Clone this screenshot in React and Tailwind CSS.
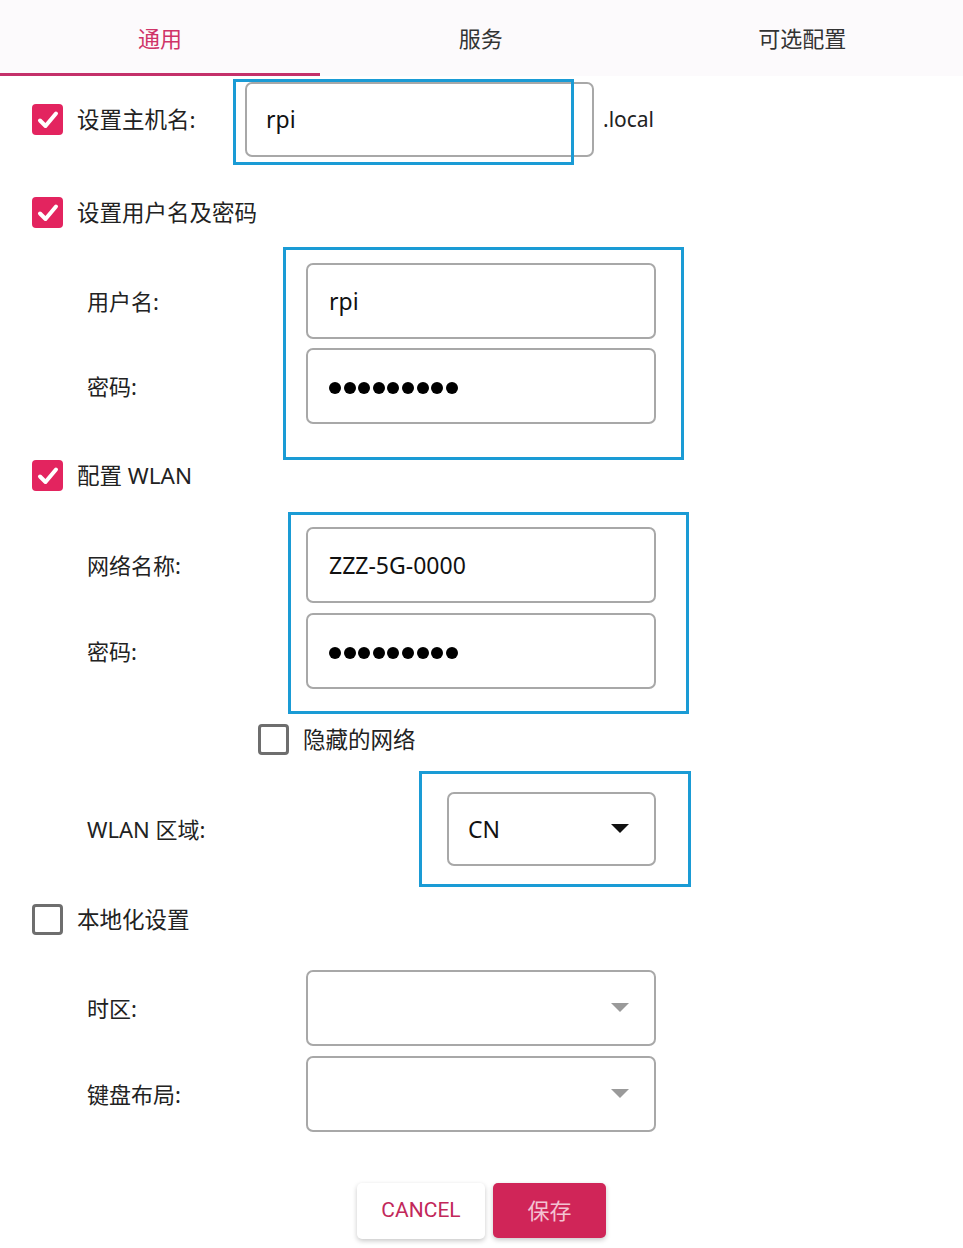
import React from "react";

const FONT = { fontFamily: "'Noto Sans', 'Noto Sans CJK SC', sans-serif" };

function Checked() {
  return (
    <div className="w-[31px] h-[31px] rounded-[4px] bg-[#e3245f] flex items-center justify-center shrink-0">
      <svg width="24" height="24" viewBox="0 0 24 24">
        <path d="M4 12.5 L9.5 18 L20 5.5" fill="none" stroke="white" strokeWidth="4" strokeLinecap="round" strokeLinejoin="round" />
      </svg>
    </div>
  );
}

function Unchecked() {
  return <div className="w-[31px] h-[31px] rounded-[4px] border-[3px] border-[#6e6e6e] bg-white shrink-0" />;
}

function Dots() {
  return (
    <div className="flex gap-[2.6px] shrink-0 mt-[3px]">
      {Array.from({ length: 9 }).map((_, i) => (
        <span key={i} className="block w-[12px] h-[12px] rounded-full bg-black shrink-0" />
      ))}
    </div>
  );
}

function Field({ children, className = "" }) {
  return (
    <div className={`w-[350px] h-[76px] shrink-0 border-2 border-[#a8a8a8] rounded-[7px] bg-white flex items-center pl-[21px] text-[23px] text-[#111] ${className}`}>
      {children}
    </div>
  );
}

function Arrow({ color }) {
  return (
    <svg width="18" height="10" viewBox="0 0 18 10" className="shrink-0">
      <path d="M0 0 H18 L9 9 Z" fill={color} />
    </svg>
  );
}

function SubRow({ label, children, className = "" }) {
  return (
    <div className={`flex items-center ${className}`}>
      <div className="w-[306px] shrink-0 pl-[87px] text-[22px] text-[#222]">{label}</div>
      {children}
    </div>
  );
}

function Blue({ className }) {
  return <div className={`absolute border-[3px] border-[#1a9bd5] pointer-events-none ${className}`} />;
}

export default function App() {
  return (
    <div className="relative w-[963px] h-[1248px] bg-white overflow-hidden" style={FONT}>
      {/* tabs */}
      <div className="flex h-[76px] bg-[#fcfafc]">
        <div className="w-[320px] flex items-center justify-center pt-[3px] border-b-[3px] border-[#c4306a] text-[22px] text-[#cf3468]">通用</div>
        <div className="flex-1 flex items-center justify-center text-[22px] text-[#333]">服务</div>
        <div className="flex-1 flex items-center justify-center text-[22px] text-[#333]">可选配置</div>
      </div>

      {/* hostname */}
      <div className="flex items-center h-[75px] mt-[6px]">
        <div className="ml-[32px]"><Checked /></div>
        <div className="ml-[14px] w-[168px] shrink-0 text-[22.5px] text-[#222]">设置主机名:</div>
        <div className="w-[349px] h-[75px] shrink-0 border-2 border-[#a8a8a8] rounded-[7px] flex items-center pl-[19px] text-[23px] text-[#111]">rpi</div>
        <div className="ml-[9px] text-[21px] text-[#222]">.local</div>
      </div>

      {/* user */}
      <div className="flex items-center h-[31px] mt-[40px]">
        <div className="ml-[32px]"><Checked /></div>
        <div className="ml-[14px] text-[22.5px] text-[#222]">设置用户名及密码</div>
      </div>
      <SubRow label="用户名:" className="mt-[35px]">
        <Field>rpi</Field>
      </SubRow>
      <SubRow label="密码:" className="mt-[9px]">
        <Field><Dots /></Field>
      </SubRow>

      {/* wlan */}
      <div className="flex items-center h-[31px] mt-[36px]">
        <div className="ml-[32px]"><Checked /></div>
        <div className="ml-[14px] text-[22.5px] text-[#222]">配置 WLAN</div>
      </div>
      <SubRow label="网络名称:" className="mt-[36px]">
        <Field>ZZZ-5G-0000</Field>
      </SubRow>
      <SubRow label="密码:" className="mt-[10px]">
        <Field><Dots /></Field>
      </SubRow>
      <div className="flex items-center h-[31px] mt-[35px]">
        <div className="ml-[258px]"><Unchecked /></div>
        <div className="ml-[14px] text-[22.5px] text-[#222]">隐藏的网络</div>
      </div>
      <div className="flex items-center mt-[37px]">
        <div className="w-[447px] shrink-0 pl-[87px] text-[22px] text-[#222]">WLAN 区域:</div>
        <div className="w-[209px] h-[74px] shrink-0 border-2 border-[#a8a8a8] rounded-[7px] flex items-center justify-between pl-[19px] pr-[25px] text-[23px] text-[#111]">
          <span>CN</span>
          <Arrow color="#111" />
        </div>
      </div>

      {/* locale */}
      <div className="flex items-center h-[31px] mt-[38px]">
        <div className="ml-[32px]"><Unchecked /></div>
        <div className="ml-[14px] text-[22.5px] text-[#222]">本地化设置</div>
      </div>
      <SubRow label="时区:" className="mt-[35px]">
        <Field className="justify-end pr-[25px]"><Arrow color="#9a9a9a" /></Field>
      </SubRow>
      <SubRow label="键盘布局:" className="mt-[10px]">
        <Field className="justify-end pr-[25px]"><Arrow color="#9a9a9a" /></Field>
      </SubRow>

      {/* buttons */}
      <div className="flex mt-[51px] pl-[357px] gap-[8px]">
        <div className="w-[128px] h-[56px] rounded-[5px] bg-white shadow-[0_2px_5px_rgba(0,0,0,0.22)] flex items-center justify-center text-[21px] text-[#c2285a]" style={{ fontFamily: "Roboto, sans-serif" }}>CANCEL</div>
        <div className="w-[113px] h-[55px] rounded-[5px] bg-[#d02558] shadow-[0_2px_5px_rgba(0,0,0,0.22)] flex items-center justify-center text-[22px] text-[#f3c2d2]">保存</div>
      </div>

      {/* annotation boxes */}
      <Blue className="left-[233px] top-[79px] w-[341px] h-[86px]" />
      <Blue className="left-[283px] top-[247px] w-[401px] h-[213px]" />
      <Blue className="left-[288px] top-[512px] w-[401px] h-[202px]" />
      <Blue className="left-[419px] top-[771px] w-[272px] h-[116px]" />
    </div>
  );
}
